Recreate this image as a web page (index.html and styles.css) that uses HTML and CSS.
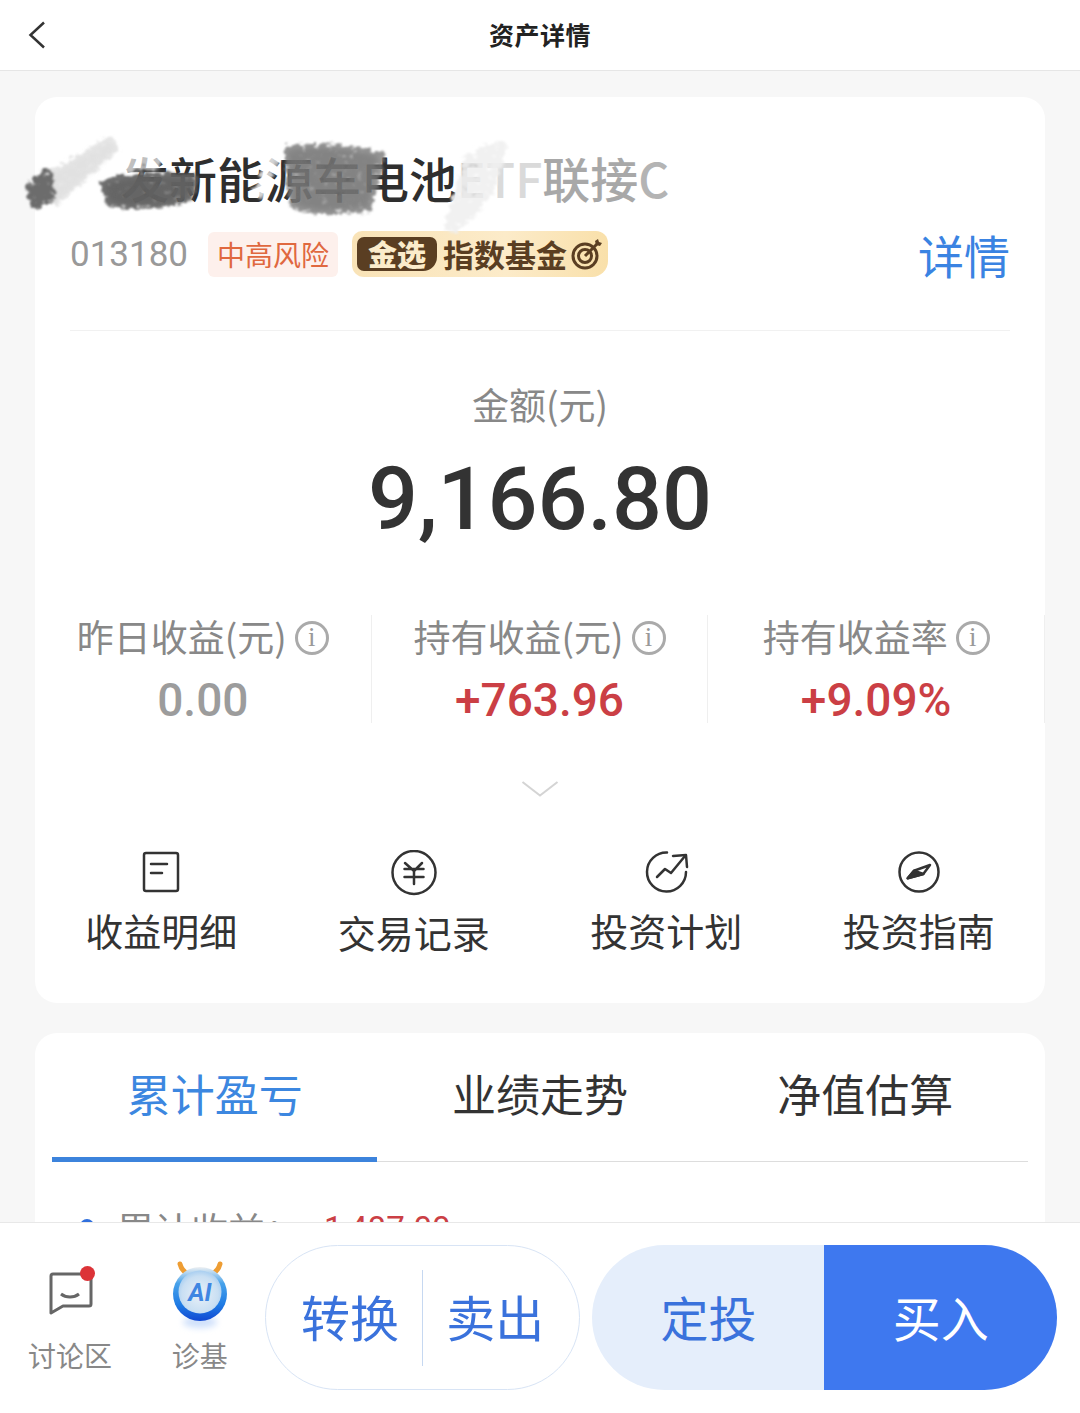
FILE: index.html
```html
<!DOCTYPE html>
<html lang="zh-CN">
  <head>
    <meta charset="UTF-8" />
    <meta name="viewport" content="width=device-width, initial-scale=1.0" />
    <title>资产详情</title>
    <link rel="stylesheet" href="styles.css">
  </head>
  <body>
    <header class="topbar">
      <svg class="back" width="18" height="28" viewBox="0 0 18 28"><path d="M16 1.5 2.5 14 16 26.500" /></svg>
      <h1>资产详情</h1>
    </header>

    <main class="content">
      <section class="card asset">
        <div class="fund-title">
          <span>发新能源车电池</span><span class="fade-a">E</span><span class="fade-b">TF</span><span class="fade-a">联接</span><span class="fade-c">C</span>
          <!-- smudges over the fund name -->
          <svg class="smudge" width="720" height="120" viewBox="0 0 720 120">
            <defs>
              <filter id="rough" x="-10%" y="-30%" width="120%" height="160%">
                <feTurbulence type="fractalNoise" baseFrequency="0.14 0.22" numOctaves="3" seed="7" result="noise" />
                <feDisplacementMap in="SourceGraphic" in2="noise" scale="10" result="moved" />
                <feColorMatrix in="noise" type="matrix" values="0 0 0 0 0  0 0 0 0 0  0 0 0 0 0  0 0 0 4 -0.500" result="grain" />
                <feComposite in="moved" in2="grain" operator="in" />
                <feGaussianBlur stdDeviation="1" />
              </filter>
              <filter id="soft" x="-10%" y="-30%" width="120%" height="160%">
                <feGaussianBlur stdDeviation="2.500" />
              </filter>
            </defs>
            <!-- soft base so the grain does not look dotted -->
            <g filter="url(#soft)">
              <path d="M44 52 L110 14 L116 24 L58 74 Z" fill="#e2e2e2" opacity=".7" />
              <path d="M30 60 L50 50 L52 68 L34 78 Z" fill="#808080" opacity=".7" />
              <path d="M104 58 C130 48 170 48 194 52 L190 70 C166 78 130 82 110 74 Z" fill="#6a6a6a" opacity=".75" />
              <path d="M288 24 C312 18 356 22 378 30 L368 80 C340 84 304 86 292 74 Z" fill="#7c7c7c" opacity=".55" />
            </g>
            <g filter="url(#rough)">
              <path d="M38 50 L112 8 L120 22 C100 40 76 60 56 80 Z" fill="#dedede" opacity=".8" />
              <path d="M112 26 L162 22 L160 42 L112 48 Z" fill="#fff" opacity=".7" />
              <path d="M26 60 C32 48 42 42 52 44 L56 68 C48 80 38 84 30 80 Z" fill="#6c6c6c" />
              <path d="M100 54 C124 44 170 44 198 48 L194 72 C166 82 130 86 106 78 Z" fill="#606060" opacity=".9" />
              <path d="M270 28 L284 24 L262 72 L252 68 Z" fill="#fff" opacity=".8" />
              <path d="M284 20 C310 14 360 18 386 26 L372 84 C340 88 300 90 288 78 Z" fill="#747474" opacity=".78" />
              <path d="M462 34 C480 18 496 12 508 18 L492 68 L458 106 L444 104 Z" fill="#efefef" opacity=".9" />
            </g>
          </svg>
        </div>

        <div class="fund-meta">
          <span class="code">013180</span>
          <span class="risk">中高风险</span>
          <span class="badge">
            <b>金选</b>
            <span>指数基金</span>
            <svg width="32" height="32" viewBox="0 0 32 32">
              <circle cx="14" cy="18" r="12" fill="none" stroke="#5a3e22" stroke-width="3" />
              <circle cx="14" cy="18" r="6.500" fill="none" stroke="#5a3e22" stroke-width="3" />
              <path d="M14 18 26 6" stroke="#5a3e22" stroke-width="3" />
              <path d="M24 3l1 4 4 1 2-3-3-1-1-3z" fill="#5a3e22" />
            </svg>
          </span>
          <a class="detail">详情</a>
        </div>

        <div class="amount">
          <div class="amount-label">金额(元)</div>
          <div class="amount-value">9,166.80</div>
        </div>

        <div class="stats">
          <div class="stat">
            <div class="stat-label">昨日收益(元)<i class="info">i</i></div>
            <div class="stat-value flat">0.00</div>
          </div>
          <div class="stat">
            <div class="stat-label">持有收益(元)<i class="info">i</i></div>
            <div class="stat-value up">+763.96</div>
          </div>
          <div class="stat">
            <div class="stat-label">持有收益率<i class="info">i</i></div>
            <div class="stat-value up">+9.09%</div>
          </div>
        </div>

        <svg class="more" width="38" height="18" viewBox="0 0 38 18"><path d="M1.500 2 19 15.500 36.500 2" /></svg>

        <div class="actions">
          <div class="action">
            <svg width="46" height="46" viewBox="0 0 46 46">
              <rect x="6" y="3" width="34" height="38" rx="2" />
              <path d="M13 14H29M13 23H24" />
            </svg>
            <span>收益明细</span>
          </div>
          <div class="action">
            <svg width="46" height="48" viewBox="0 0 46 48">
              <circle cx="23" cy="22.500" r="21.500" />
              <path d="M14 13l9 8 8-8M13.500 19h19M13.500 27h19M23 21v13" />
            </svg>
            <span>交易记录</span>
          </div>
          <div class="action">
            <svg width="46" height="46" viewBox="0 0 46 46">
              <path d="M24 2.500A19.500 19.500 0 1 0 43 22" />
              <path d="M14 27l8-8 6 4 14-17" />
              <path d="M30 6l13-1 1 12" />
            </svg>
            <span>投资计划</span>
          </div>
          <div class="action">
            <svg width="46" height="46" viewBox="0 0 46 46">
              <circle cx="23" cy="22" r="19.500" />
              <path d="M34 15 18 20.700 11.700 28.300 27.300 24Z" />
              <path d="M18 20.700 11.700 28.300 27.300 24Z" class="solid" />
            </svg>
            <span>投资指南</span>
          </div>
        </div>
      </section>

      <section class="card chart">
        <div class="tabs">
          <div class="tab active">累计盈亏</div>
          <div class="tab">业绩走势</div>
          <div class="tab">净值估算</div>
        </div>
        <div class="legend">
          <i class="dot"></i>
          <span>累计收益：</span>
          <em>1,487.00</em>
        </div>
      </section>
    </main>

    <footer class="bottombar">
      <div class="shortcut talk">
        <span class="talk-icon">
          <svg width="46" height="50" viewBox="0 0 46 50">
            <path d="M6 9H42a2 2 0 0 1 2 2V39a2 2 0 0 1-2 2H16L4 48V11a2 2 0 0 1 2-2Z" />
            <path d="M14 29c5 4 13 4 18 0" />
          </svg>
          <i></i>
        </span>
        <span>讨论区</span>
      </div>
      <div class="shortcut ai">
        <svg width="60" height="74" viewBox="0 0 60 74">
          <defs>
            <radialGradient id="ball" cx="50%" cy="55%" r="60%">
              <stop offset="0" stop-color="#e9f1f8" />
              <stop offset=".7" stop-color="#c9dff3" />
              <stop offset="1" stop-color="#9cc8f0" />
            </radialGradient>
            <linearGradient id="ring" x1="0" y1="0" x2="0" y2="1">
              <stop offset="0" stop-color="#eef0f2" />
              <stop offset=".3" stop-color="#47a2ea" />
              <stop offset=".7" stop-color="#1f7be4" />
              <stop offset="1" stop-color="#1148d2" />
            </linearGradient>
            <filter id="glow" x="-30%" y="-60%" width="160%" height="220%">
              <feGaussianBlur stdDeviation="3" />
            </filter>
          </defs>
          <ellipse cx="30" cy="61" rx="17" ry="6" fill="#cfe0fb" filter="url(#glow)" />
          <path d="M10 3c1 4 4 8 8 10M50 3c-1 4-4 8-8 10" fill="none" stroke="#ee9d33" stroke-width="5" stroke-linecap="round" />
          <circle cx="30" cy="33" r="27" fill="url(#ring)" />
          <circle cx="30" cy="31" r="21.500" fill="url(#ball)" />
          <text x="30" y="40" text-anchor="middle">AI</text>
        </svg>
        <span>诊基</span>
      </div>
      <div class="pill-outline">
        <button class="swap">转换</button>
        <i></i>
        <button class="sell">卖出</button>
      </div>
      <div class="pill-buy">
        <button class="plan">定投</button>
        <button class="buy">买入</button>
      </div>
    </footer>
  </body>
</html>
```

FILE: styles.css
```css
* {
  box-sizing: border-box;
}

html,
body {
  height: 100%;
}

body {
  margin: 0;
  display: flex;
  flex-direction: column;
  overflow: hidden;
  background: #f7f7f7;
  color: #333;
  font-family: "Noto Sans CJK SC", "Roboto", sans-serif;
}

.topbar {
  position: relative;
  flex: none;
  height: 71px;
  padding-bottom: 2px;
  display: flex;
  align-items: center;
  justify-content: center;
  background: #fff;
  border-bottom: 1px solid #e6e6e6;
}

.topbar h1 {
  margin: 0;
  font-size: 25px;
  font-weight: 700;
  letter-spacing: 0.5px;
  color: #222;
}

.back {
  position: absolute;
  left: 28px;
  top: 21px;
}

.back path {
  fill: none;
  stroke: #333;
  stroke-width: 2.5;
}

.content {
  flex: 1;
  min-height: 0;
  overflow: hidden;
  padding: 26px 35px 0;
}

.card {
  background: #fff;
  border-radius: 22px;
}

.asset {
  height: 906px;
  padding: 50px 35px 0;
  display: flex;
  flex-direction: column;
}

.fund-title {
  position: relative;
  height: 60px;
  padding-left: 51px;
  font-size: 48px;
  line-height: 60px;
  font-weight: 500;
  color: #2e2e2e;
  white-space: nowrap;
}

.fund-title span {
  vertical-align: top;
}

.fade-a {
  color: #a8a8a8;
}

.fade-b {
  color: #dadada;
}

.fade-c {
  color: #b4b4b4;
}

.smudge {
  position: absolute;
  left: -70px;
  top: -20px;
  pointer-events: none;
}

.fund-meta {
  margin-top: 24px;
  height: 100px;
  padding-bottom: 53px;
  display: flex;
  align-items: center;
  border-bottom: 1px solid #f1f1f1;
}

.code {
  font-family: "Roboto", sans-serif;
  font-size: 35px;
  color: #999;
}

.risk {
  margin-left: 20px;
  width: 130px;
  height: 45px;
  border-radius: 6px;
  background: #fdf0ec;
  color: #e0683f;
  font-size: 28px;
  line-height: 45px;
  text-align: center;
}

.badge {
  margin-left: 14px;
  width: 256px;
  height: 46px;
  padding-left: 5px;
  display: flex;
  align-items: center;
  border-radius: 10px 12px 16px 12px;
  background: linear-gradient(90deg, #f9e3b7, #fcebc9 60%, #f9e0aa);
  color: #5a3e22;
  font-size: 31px;
  font-weight: 700;
  line-height: 36px;
}

.badge b {
  width: 80px;
  height: 34px;
  margin-right: 6px;
  border-radius: 7px 7px 14px 7px;
  background: #5a3e22;
  color: #fbeccb;
  font-size: 29px;
  line-height: 32px;
  text-align: center;
}

.badge svg {
  margin-left: 4px;
}

.detail {
  margin-left: auto;
  font-size: 46px;
  line-height: 50px;
  color: #3a83e2;
}

.amount {
  text-align: center;
}

.amount-label {
  margin-top: 48px;
  height: 50px;
  font-size: 37px;
  line-height: 50px;
  color: #888;
}

.amount-value {
  margin-top: 20px;
  height: 100px;
  font-family: "Roboto", sans-serif;
  font-size: 88px;
  font-weight: 500;
  line-height: 100px;
  color: #333;
}

.stats {
  margin: 66px -35px 0;
  display: grid;
  grid-template-columns: repeat(3, 1fr);
  height: 107px;
}

.stat {
  border-right: 1px solid #efefef;
  text-align: center;
}

.stat-label {
  height: 46px;
  padding-bottom: 4px;
  display: flex;
  align-items: center;
  justify-content: center;
  font-size: 37px;
  line-height: 46px;
  color: #888;
}

.info {
  width: 34px;
  height: 34px;
  margin: 4px 0 0 8px;
  border: 3px solid #aaa;
  border-radius: 50%;
  font-family: "Liberation Serif", serif;
  font-size: 27px;
  font-style: normal;
  line-height: 27px;
  color: #999;
}

.stat-value {
  margin-top: 16px;
  font-family: "Roboto", sans-serif;
  font-size: 46px;
  font-weight: 500;
  line-height: 46px;
}

.flat {
  color: #9c9c9c;
}

.up {
  color: #cb3f45;
}

.more {
  margin: 58px auto 0;
  flex: none;
}

.more path {
  fill: none;
  stroke: #d4d4d4;
  stroke-width: 2;
}

.actions {
  margin: 52px -35px 0;
  display: grid;
  grid-template-columns: repeat(4, 1fr);
}

.action {
  display: flex;
  flex-direction: column;
  align-items: center;
  font-size: 38px;
  line-height: 50px;
  color: #333;
}

.action svg {
  margin-bottom: 9px;
}

.action svg * {
  fill: none;
  stroke: #333;
  stroke-width: 2.500;
  stroke-linecap: round;
  stroke-linejoin: round;
}

.action svg .solid {
  fill: #333;
}

.chart {
  margin-top: 30px;
  height: 400px;
  padding: 0 17px;
}

.tabs {
  display: grid;
  grid-template-columns: repeat(3, 1fr);
  height: 129px;
  border-bottom: 1px solid #ddd;
}

.tab {
  font-size: 44px;
  line-height: 120px;
  text-align: center;
  color: #333;
}

.tab.active {
  height: 129px;
  border-bottom: 5px solid #3c83dc;
  color: #3c87e0;
}

.legend {
  margin-top: 42px;
  padding-left: 28px;
  display: flex;
  align-items: center;
  font-size: 37px;
  line-height: 50px;
  color: #888;
}

.dot {
  align-self: flex-start;
  width: 14px;
  height: 14px;
  margin: 15px 23px 0 0;
  border-radius: 50%;
  background: #2f6fdd;
}

.legend em {
  margin-left: 22px;
  font-family: "Roboto", sans-serif;
  font-size: 33px;
  font-style: normal;
  color: #cb3f45;
}

.bottombar {
  flex: none;
  height: 191px;
  padding: 22px 23px 0 0;
  display: flex;
  align-items: flex-start;
  background: #fff;
  border-top: 1px solid #e8e8e8;
}

.shortcut {
  height: 130px;
  display: flex;
  flex-direction: column;
  align-items: center;
  justify-content: flex-end;
  font-size: 28px;
  line-height: 40px;
  color: #888;
}

.talk {
  width: 140px;
}

.talk-icon {
  position: relative;
  display: block;
  width: 46px;
  height: 50px;
  margin-bottom: 20px;
}

.talk-icon svg {
  display: block;
}

.talk-icon path {
  fill: none;
  stroke: #666;
  stroke-width: 3;
  stroke-linejoin: round;
}

.talk-icon i {
  position: absolute;
  left: 33px;
  top: 1px;
  width: 15px;
  height: 15px;
  border-radius: 50%;
  background: #dc3338;
}

.ai {
  width: 120px;
}

.ai svg {
  display: block;
}

.ai text {
  font-family: "Roboto", sans-serif;
  font-size: 25px;
  font-style: italic;
  font-weight: 700;
  fill: #3f86e2;
}

.pill-outline {
  width: 316px;
  height: 145px;
  margin-left: 5px;
  display: flex;
  align-items: center;
  border: 1px solid #d8e4f5;
  border-radius: 73px;
}

.pill-outline button {
  flex: 1;
  padding-bottom: 4px;
  font-size: 49px;
  color: #3a72dc;
}

.pill-outline .swap {
  padding-left: 12px;
}

.pill-outline .sell {
  padding-right: 12px;
}

.pill-outline i {
  flex: none;
  width: 1px;
  height: 96px;
  background: #c6d8f1;
}

.pill-buy {
  width: 465px;
  height: 145px;
  margin-left: 12px;
  display: flex;
  border-radius: 73px;
  overflow: hidden;
}

button {
  padding: 0;
  border: none;
  background: none;
  font-family: inherit;
  line-height: 1;
}

.pill-buy button {
  flex: 1;
  padding-bottom: 4px;
  font-size: 48px;
}

.pill-buy .plan {
  flex: none;
  width: 232px;
  background: #e5eefb;
  color: #3a72dc;
}

.buy {
  background: #3e78ef;
  color: #fff;
}
```
